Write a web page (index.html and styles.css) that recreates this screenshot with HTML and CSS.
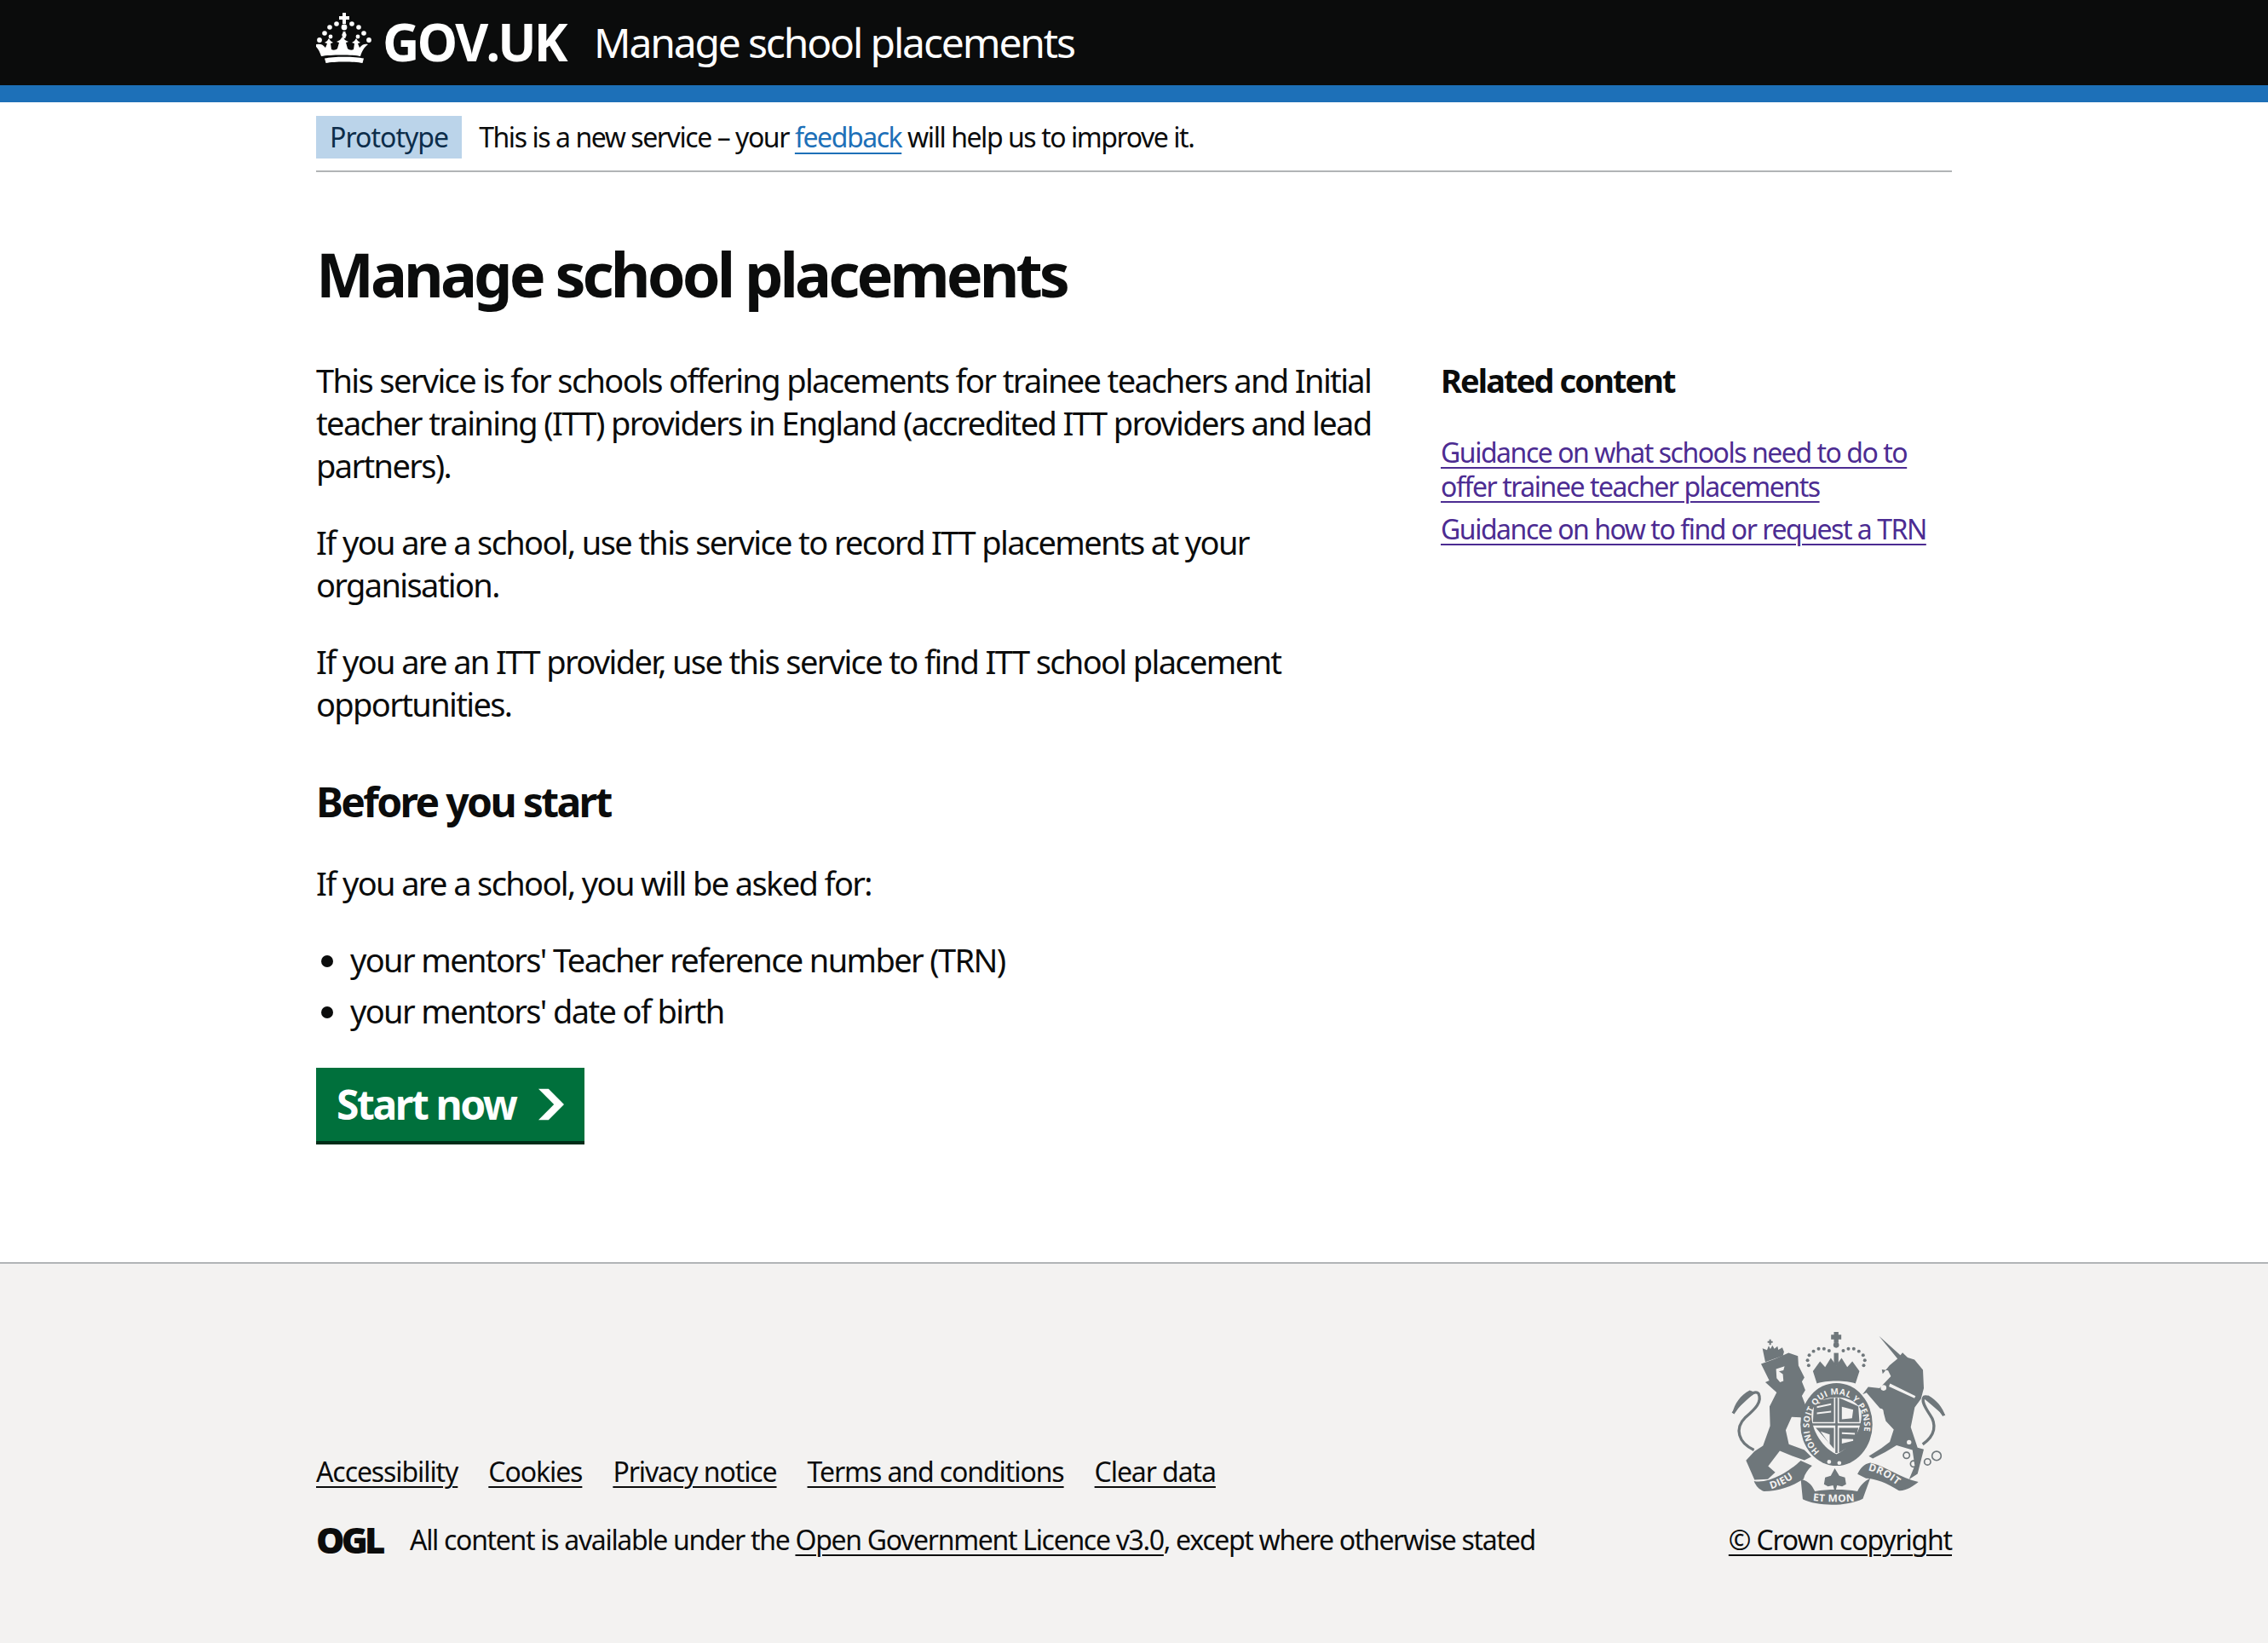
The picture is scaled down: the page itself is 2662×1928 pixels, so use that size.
FILE: index.html
```html
<!DOCTYPE html>
<html lang="en">
<head>
  <meta charset="UTF-8">
  <title>Manage school placements</title>
  <link rel="stylesheet" href="styles.css">
</head>
<body>

<!-- Header -->
<header class="header">
  <div class="container header-row">
    <a class="logo" href="#">
      <svg class="crown" viewBox="0 0 64 60" aria-hidden="true">
        <path d="M30 1h4v4h4v4h-4v5h-4V9h-4V5h4z"/>
        <circle cx="32" cy="18" r="3.4"/>
        <circle cx="23" cy="14" r="2.8"/><circle cx="41" cy="14" r="2.8"/>
        <circle cx="15" cy="18" r="2.8"/><circle cx="49" cy="18" r="2.8"/>
        <circle cx="9" cy="25" r="2.8"/><circle cx="55" cy="25" r="2.8"/>
        <circle cx="3" cy="33" r="2.9"/><circle cx="61" cy="33" r="2.9"/>
        <circle cx="32" cy="27" r="2.6"/>
        <circle cx="16" cy="29" r="2.4"/><circle cx="48" cy="29" r="2.4"/>
        <path d="M30.500 23h3v8h-3z"/>
        <path d="M0 38c4-1 7 0 10 4l2-5-3-1 3-2 2-3 2 3 3 2-3 1 1 7c2 1 5 1 7-1l2-7-3-1 4-2 3-4 3 4 4 2-3 1 2 7c2 2 5 2 7 1l1-7-3-1 3-2 2-3 2 3 3 2-3 1 2 5c3-4 6-5 10-4-5 4-7 8-9 14-8-2-36-2-46 0-2-6-4-10-9-14z"/>
        <path d="M9 54.500c10-2.500 36-2.500 46 0l-1.500 5.500c-10-2-33-2-43 0z"/>
      </svg>
      <span class="logo-text">GOV.UK</span>
    </a>
    <a class="service-name" href="#">Manage school placements</a>
  </div>
</header>
<div class="header-stripe"></div>

<div class="container">
  <!-- Phase banner -->
  <div class="phase-banner">
    <strong class="tag">Prototype</strong>
    <span>This is a new service – your <a class="link" href="#">feedback</a> will help us to improve it.</span>
  </div>

  <main class="main">
    <h1>Manage school placements</h1>
    <div class="columns">
      <div class="content">
        <p>This service is for schools offering placements for trainee teachers and Initial teacher training (ITT) providers in England (accredited ITT providers and lead partners).</p>
        <p>If you are a school, use this service to record ITT placements at your organisation.</p>
        <p>If you are an ITT provider, use this service to find ITT school placement opportunities.</p>
        <h2>Before you start</h2>
        <p>If you are a school, you will be asked for:</p>
        <ul>
          <li>your mentors' Teacher reference number (TRN)</li>
          <li>your mentors' date of birth</li>
        </ul>
        <a class="start-button" href="#">Start now
          <svg class="start-icon" viewBox="0 0 33 40" aria-hidden="true"><path fill="currentColor" d="M0 0h13l20 20-20 20H0l20-20z"/></svg>
        </a>
      </div>
      <aside class="related">
        <h3>Related content</h3>
        <ul>
          <li><a href="#">Guidance on what schools need to do to offer trainee teacher placements</a></li>
          <li><a href="#">Guidance on how to find or request a TRN</a></li>
        </ul>
      </aside>
    </div>
  </main>
</div>

<!-- Footer -->
<footer class="footer">
  <div class="container footer-row">
    <div class="footer-meta">
      <ul class="footer-links">
        <li><a href="#">Accessibility</a></li>
        <li><a href="#">Cookies</a></li>
        <li><a href="#">Privacy notice</a></li>
        <li><a href="#">Terms and conditions</a></li>
        <li><a href="#">Clear data</a></li>
      </ul>
      <div class="licence">
        <span class="ogl">OGL</span>
        <span>All content is available under the <a href="#">Open Government Licence v3.0</a>, except where otherwise stated</span>
      </div>
    </div>
    <div class="copyright">
      <svg class="arms" viewBox="100 68 760 616" aria-hidden="true">
        <!-- small crown on lion -->
        <path d="M210 132l16 6 6-15 6 11 7-13 7 12 11-9 3 13 14-8 6 15-4 14-62 22z"/>
        <path d="M234 100h6v6h6v6h-6v8h-6v-8h-6v-6h6z"/>
        <!-- lion -->
        <path d="M205 187l50-18 47-21 33 11 2 34 21 42-9 14 12 30-12 20 24 62 20 42-26 22-22-50-32-1-21 46 11 50 55 20 24 24-24 12-43-15-44-18-41 54 25 22-26 24-47 2-30-68 30-32 30-20 25-70-2-68 25-50-40-36 14-6z"/>
        <path class="arms-gap" d="M258 205l30-10-4 14-16 4 14 10 2 24-12 4-12-14z"/>
        <path fill="none" class="arms-line" stroke-width="10" d="M180 490c-55-25-70-75-30-115 35-30 60-55 46-84-12-14-50 10-90 70"/>
        <path d="M105 358c5-28 28-62 60-78l22 8c-25 15-55 50-82 70z"/>
        <!-- unicorn -->
        <path d="M621 88l82 74-14 10z"/>
        <path d="M634 222l24-30 28-23 18-22 18 17 24 8 30 36 3 64-10 38-22 30-14 70 24 72 22 6-22 86-30 20 20-48-8-56-56-16-40 24-44 22-14-8 44-28 30-22 14-44-28-30-8-30-60-70-14 6 20-26 40 4 40-42-10-20-22-4z"/>
        <path fill="none" class="arms-line" stroke-width="10" d="M775 470c45-30 50-70 25-105-20-30-30-50-20-62 14-6 40 20 70 66"/>
        <path d="M855 370c-10-30-30-55-60-72l-22 6c25 18 50 45 82 66z"/>
        <circle class="arms-dot" cx="637" cy="271" r="10"/>
        <circle class="arms-dot" cx="625" cy="356" r="12"/>
        <circle class="arms-dot" cx="759" cy="380" r="11"/>
        <circle class="arms-dot" cx="750" cy="426" r="8"/>
        <circle class="arms-dot" cx="727" cy="463" r="8"/>
        <path class="arms-gap" d="M660 256l90 44-4 8-90-42z"/>
        <g class="arms-ring"><circle cx="718" cy="509" r="11"/><circle cx="743" cy="539" r="11"/><circle cx="792" cy="532" r="11"/><circle cx="824" cy="511" r="16"/></g>
        <!-- royal crown -->
        <path d="M462 74h16v10h10v16h-10v12h-16v-12h-10V84h10z"/>
        <circle cx="470" cy="120" r="10"/>
        <path d="M462 148h16v44h-16z"/>
        <path d="M388 212l25-34 18 20 20-32 19 26 19-26 20 32 18-20 25 34-14 44c-30-12-106-12-136 0z"/>
        <path class="arms-gap" d="M398 262c30-14 116-14 146 0l-3 8c-30-10-110-10-140 0z"/>
        <g class="arms-crown-dots">
          <circle cx="373" cy="192" r="6"/><circle cx="369" cy="174" r="6"/><circle cx="375" cy="156" r="6"/><circle cx="390" cy="142" r="6"/><circle cx="408" cy="133" r="6"/><circle cx="427" cy="133" r="6"/><circle cx="445" cy="140" r="6"/>
          <circle cx="567" cy="192" r="6"/><circle cx="571" cy="174" r="6"/><circle cx="565" cy="156" r="6"/><circle cx="550" cy="142" r="6"/><circle cx="532" cy="133" r="6"/><circle cx="513" cy="133" r="6"/><circle cx="495" cy="140" r="6"/>
        </g>
        <!-- garter and shield -->
        <ellipse cx="471" cy="400" rx="127" ry="146"/>
        <path class="arms-gap" d="M384 355c8-32 44-50 87-50s79 18 87 50c8 50-30 125-87 150-57-25-95-100-87-150z"/>
        <path d="M385 396h172v8H385zM467 306h8v195h-8z"/>
        <path d="M392 320l70-14v86h-74zM480 306l68 30 4 56h-72zM398 412h64v74zM480 412h68l-12 54-56 34z"/>
        <path class="arms-gap" d="M402 336l50-10v6l-50 10zM402 358l50-6v6l-50 6zM490 338l40 10-4 30-36 4z"/>
        <path class="arms-gap" d="M415 425l32 10v35zM490 428l46 2v6l-46-2zM490 450l40 2v6l-40 10z"/>
        <defs>
          <path id="garter" d="M412 496A97 113 0 1 1 532 496"/>
          <path id="scroll-left" d="M240 628c40-12 75-30 106-62"/>
          <path id="scroll-mid" d="M382 668c50 7 125 7 174 0"/>
          <path id="scroll-right" d="M582 562c42 8 80 32 118 66"/>
        </defs>
        <text class="arms-text"><textPath href="#garter">HONI SOIT QUI MAL Y PENSE</textPath></text>
        <!-- motto scroll -->
        <path d="M180 600c50 10 120-30 165-72l40 18c-16 14-26 30-30 46-40 26-90 44-140 44-16-6-28-18-35-36z"/>
        <path d="M345 592c30 8 42 26 50 44 45-8 105-8 150 0 8-18 25-38 45-46l-26 72c-55 28-160 28-212 2z"/>
        <path d="M545 575c12-24 24-36 45-40 50 10 110 55 170 68-18 16-50 34-70 30-40-26-80-42-115-43z"/>
        <text class="arms-text arms-scroll"><textPath href="#scroll-left">DIEU</textPath></text>
        <text class="arms-text arms-scroll"><textPath href="#scroll-mid" startOffset="6">ET MON</textPath></text>
        <text class="arms-text arms-scroll"><textPath href="#scroll-right">DROIT</textPath></text>
        <!-- fleur de lis and tie -->
        <path d="M465 555l16 26 20 6 4 24-14 8-18-4-4 16-6 0-4-16-18 4-14-8 4-24 20-6z"/>
        <circle class="arms-dot" cx="445" cy="532" r="7"/><circle class="arms-dot" cx="481" cy="536" r="7"/>
      </svg>
      <a href="#">© Crown copyright</a>
    </div>
  </div>
</footer>

</body>
</html>
```

FILE: styles.css
```css
* {
  box-sizing: border-box;
}
body {
  margin: 0;
  font-family: "Noto Sans", Arial, sans-serif;
  font-size: 38px;
  line-height: 50px;
  color: #0b0c0c;
  background: #fff;
  letter-spacing: -0.043em;
}
.container {
  width: 1920px;
  margin: 0 auto;
}
p {
  margin: 0 0 40px;
}

/* Header */
.header {
  background: #0b0c0c;
  height: 100px;
  color: #fff;
}
.header-row {
  display: flex;
  align-items: center;
  height: 100px;
}
.header a {
  color: #fff;
  text-decoration: none;
}
.logo {
  display: flex;
  align-items: center;
  width: 326px;
}
.crown {
  width: 66px;
  height: 60px;
  fill: #fff;
  margin-right: 12px;
  margin-top: -12px;
}
.logo-text {
  font-size: 60px;
  line-height: 60px;
  font-weight: 700;
  font-family: "Open Sans", Arial, sans-serif;
  letter-spacing: -0.05em;
  margin-top: -2px;
}
.service-name {
  font-size: 48px;
  letter-spacing: -0.045em;
}
.header-stripe {
  height: 20px;
  background: #1d70b8;
}

/* Phase banner */
.phase-banner {
  display: flex;
  align-items: center;
  padding-top: 16px;
  padding-bottom: 14px;
  border-bottom: 2px solid #b1b4b6;
  box-sizing: content-box;
  height: 50px;
  font-size: 32px;
  line-height: 40px;
  letter-spacing: -0.045em;
}
.tag {
  display: block;
  background: #bbd4ea;
  color: #0c2d4a;
  font-weight: 400;
  height: 50px;
  line-height: 50px;
  padding: 0 16px;
  margin-right: 20px;
  letter-spacing: -0.03em;
}
.link {
  color: #1d70b8;
  text-decoration: underline;
  text-decoration-thickness: 2px;
  text-underline-offset: 6px;
}

/* Main */
.main {
  padding-top: 79px;
  padding-bottom: 138px;
}
h1 {
  margin: 0 0 60px;
  font-size: 72px;
  line-height: 80px;
  font-weight: 700;
  letter-spacing: -0.055em;
}
.columns {
  display: grid;
  grid-template-columns: 1260px 600px;
  column-gap: 60px;
}
h2 {
  margin: 0 0 40px;
  padding-top: 20px;
  font-size: 48px;
  line-height: 60px;
  font-weight: 700;
  letter-spacing: -0.055em;
}
.content ul {
  margin: 0 0 42px;
  padding-left: 40px;
}
.content li {
  margin-bottom: 10px;
}
.start-button {
  display: inline-flex;
  align-items: center;
  height: 90px;
  padding: 0 24px;
  background: #00703c;
  border-bottom: 4px solid #002d18;
  color: #fff;
  font-size: 48px;
  line-height: 1;
  font-weight: 700;
  letter-spacing: -0.05em;
  text-decoration: none;
}
.start-icon {
  width: 30px;
  height: 38px;
  margin-left: 26px;
}

/* Related */
.related h3 {
  margin: 0 0 40px;
  font-size: 38px;
  line-height: 50px;
  font-weight: 700;
  letter-spacing: -0.05em;
}
.related ul {
  margin: 0;
  padding: 0;
  list-style: none;
  font-size: 32px;
  line-height: 40px;
  letter-spacing: -0.046em;
}
.related li {
  margin-bottom: 10px;
}
.related a {
  color: #4c2c92;
  text-underline-offset: 5px;
  text-decoration-thickness: 2px;
}

/* Footer */
.footer {
  background: #f3f2f1;
  border-top: 2px solid #b1b4b6;
  height: 448px;
  font-size: 32px;
  line-height: 40px;
  letter-spacing: -0.034em;
  padding-top: 78px;
}
.footer a {
  color: #0b0c0c;
  text-underline-offset: 5px;
  text-decoration-thickness: 2px;
}
.footer-row {
  display: flex;
  justify-content: space-between;
  align-items: flex-end;
}
.footer-links {
  display: flex;
  gap: 36px;
  margin: 0 0 40px;
  padding: 0;
  list-style: none;
}
.licence {
  display: flex;
  align-items: center;
  gap: 26px;
  letter-spacing: -0.041em;
}
.ogl {
  width: 84px;
  font-family: "Open Sans", Arial, sans-serif;
  font-size: 42px;
  font-weight: 800;
  letter-spacing: -0.09em;
}
.copyright {
  display: flex;
  flex-direction: column;
  align-items: flex-end;
  letter-spacing: -0.037em;
}
.arms {
  width: 253px;
  height: 205px;
  margin-bottom: 21px;
  margin-right: 6px;
  fill: #6f777b;
}
.arms-gap,
.arms-dot {
  fill: #f3f2f1;
}
.arms-line {
  stroke: #6f777b;
}
.arms-ring circle {
  fill: none;
  stroke: #6f777b;
  stroke-width: 5px;
}
.arms-text {
  font-family: "Open Sans", Arial, sans-serif;
  font-size: 30px;
  font-weight: 700;
  letter-spacing: 1px;
  fill: #f3f2f1;
}
.arms-scroll {
  font-size: 36px;
  letter-spacing: 1px;
}
```
